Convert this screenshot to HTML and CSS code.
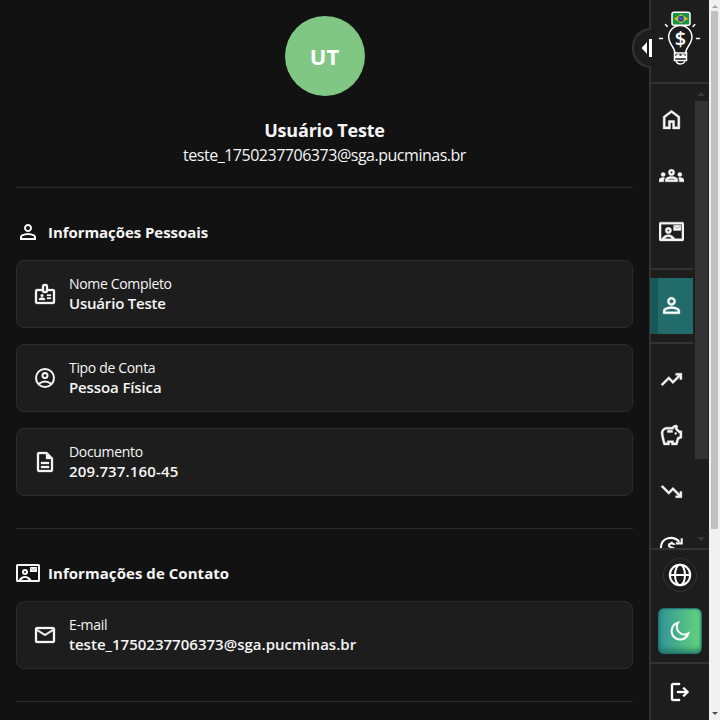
FILE: index.html
```
<!DOCTYPE html>
<html lang="pt-BR">
<head>
<meta charset="utf-8">
<title>Perfil</title>
<link rel="stylesheet" href="styles.css">
</head>
<body>
<svg class="sprite" aria-hidden="true">
  <symbol id="person" viewBox="0 -960 960 960"><path d="M480-480q-66 0-113-47t-47-113q0-66 47-113t113-47q66 0 113 47t47 113q0 66-47 113t-113 47ZM160-160v-112q0-34 17.5-62.5T224-378q62-31 126-46.5T480-440q66 0 130 15.5T736-378q29 15 46.5 43.5T800-272v112H160Zm80-80h480v-32q0-11-5.5-20T700-306q-54-27-109-40.5T480-360q-56 0-111 13.5T260-306q-9 5-14.5 14t-5.5 20v32Zm240-320q33 0 56.5-23.5T560-640q0-33-23.5-56.5T480-720q-33 0-56.5 23.5T400-640q0 33 23.5 56.5T480-560Z"/></symbol>
  <symbol id="contact" viewBox="0 0 24 24"><path fill-rule="evenodd" d="M1.5 3h21Q24 3 24 4.5v15q0 1.5-1.5 1.5h-21Q0 21 0 19.5v-15Q0 3 1.5 3ZM2 5v14h.6C4 16.5 6.500 15 9 15s5 1.500 6.400 4H22V5Zm3.500 14h7C11.500 17.600 10.300 17 9 17s-2.500.6-3.500 2ZM9 8a3 3 0 1 1 0 6 3 3 0 0 1 0-6Zm0 2a1 1 0 1 0 0 2 1 1 0 0 0 0-2Z"/><path d="M14 6h7v5h-7Z"/><path d="m14.500 7 3 2 3-2" fill="none" stroke="#333" stroke-width=".8"/></symbol>
</svg>
<div class="app">
  <main class="profile">
    <header class="hero">
      <div class="avatar">UT</div>
      <h1>Usuário Teste</h1>
      <p>teste_1750237706373@sga.pucminas.br</p>
    </header>
    <section class="section">
      <h2><svg class="icon"><use href="#person"/></svg><span class="title-personal">Informações Pessoais</span></h2>
      <div class="card">
        <svg class="icon" viewBox="0 0 24 24"><path fill-rule="evenodd" d="M11 2h2q2 0 2 2v3h5q2 0 2 2v11q0 2-2 2H4q-2 0-2-2V9q0-2 2-2h5V4q0-2 2-2Zm0 2v5h2V4ZM4 9v11h16V9h-5q0 2-2 2h-2q-2 0-2-2Z"/><circle cx="9" cy="13.500" r="1.500"/><path d="M6 18v-.6q0-1.900 3-1.900t3 1.900v.6ZM14 12.500h4V14h-4Zm0 3h4V17h-4Z"/></svg>
        <div class="field"><span class="label">Nome Completo</span><strong>Usuário Teste</strong></div>
      </div>
      <div class="card">
        <svg class="icon line" viewBox="0 0 24 24"><circle cx="12" cy="12" r="9"/><circle cx="12" cy="9.500" r="2.500"/><path d="M5.500 18C7.300 16.700 9.500 15.500 12 15.500s4.700 1.200 6.500 2.500"/></svg>
        <div class="field"><span class="label">Tipo de Conta</span><strong class="kind">Pessoa Física</strong></div>
      </div>
      <div class="card">
        <svg class="icon" viewBox="0 -960 960 960"><path d="M320-240h320v-80H320v80Zm0-160h320v-80H320v80ZM240-80q-33 0-56.500-23.500T160-160v-640q0-33 23.500-56.500T240-880h320l240 240v480q0 33-23.500 56.500T720-80H240Zm280-520v-200H240v640h480v-440H520Z"/></svg>
        <div class="field"><span class="label">Documento</span><strong class="number">209.737.160-45</strong></div>
      </div>
    </section>
    <section class="section">
      <h2><svg class="icon"><use href="#contact"/></svg><span class="title-contact">Informações de Contato</span></h2>
      <div class="card">
        <svg class="icon" viewBox="0 -960 960 960"><path d="M160-160q-33 0-56.500-23.500T80-240v-480q0-33 23.500-56.500T160-800h640q33 0 56.500 23.500T880-720v480q0 33-23.500 56.500T800-160H160Zm320-280L160-640v400h640v-400L480-440Zm0-80 320-200H160l320 200Z"/></svg>
        <div class="field"><span class="label">E-mail</span><strong class="mail">teste_1750237706373@sga.pucminas.br</strong></div>
      </div>
    </section>
  </main>
  <aside class="sidebar">
    <div class="brand">
      <svg class="logo" viewBox="0 0 44 58" fill="none" stroke="#fff" stroke-width="1.500" stroke-linecap="round">
        <path d="M17 43.500C17 37 10.700 34.500 10.700 27a11.600 11.600 0 0 1 23.200 0C33.900 34.500 27.600 37 27.600 43.500M1.500 28.500h3M38.500 28.500h3M7.500 14.500l1.800 2M36.800 14.500l-1.800 2"/>
        <path d="M16.500 43h12v3.500h-12ZM16.500 47.500h12v3h-12ZM18.500 52c1 2.600 6.500 2.600 8 0M19 45h2M24 45h2"/>
        <rect x="14" y="2.300" width="18" height="13" rx="2" fill="#159447"/>
        <path d="m23 4.300 7 4.500-7 4.500-7-4.500Z" fill="#d9c322" stroke="none"/><circle cx="23" cy="8.800" r="3" fill="#24479b" stroke="none"/><path d="M21 8q2.200-.2 4 1.500" stroke="#9db5d8" stroke-width=".5"/>
        <text class="dollar" x="22.400" y="35.500">$</text>
      </svg>
    </div>
    <div class="nav-row">
      <nav>
        <a><svg class="icon" viewBox="0 -960 960 960"><path d="M240-200h120v-240h240v240h120v-360L480-740 240-560v360Zm-80 80v-480l320-240 320 240v480H520v-240h-80v240H160Z"/></svg></a>
        <a><svg class="icon" viewBox="0 0 24 24"><path fill-rule="evenodd" d="M12 6a3 3 0 1 1 0 6 3 3 0 0 1 0-6Zm0 2a1 1 0 1 0 0 2 1 1 0 0 0 0-2ZM6 18v-1.500c0-2.200 2.700-3.500 6-3.500s6 1.300 6 3.500V18Zm2.200-2h7.600c-.5-.6-2-1-3.800-1s-3.300.4-3.800 1Z"/><circle cx="4" cy="11" r="2"/><circle cx="20" cy="11" r="2"/><path d="M0 18v-1.500C0 14.700 2 14 4 14l1.500.2A4 4 0 0 0 4.500 17v1ZM24 18v-1.500c0-1.800-2-2.500-4-2.500l-1.500.2a4 4 0 0 1 1 2.800v1Z"/></svg></a>
        <a><svg class="icon"><use href="#contact"/></svg></a>
        <hr>
        <a class="active"><svg class="icon"><use href="#person"/></svg></a>
        <hr>
        <a><svg class="icon" viewBox="0 -960 960 960"><path d="m136-240-56-56 296-298 160 160 208-206H640v-80h240v240h-80v-104L536-320 376-480 136-240Z"/></svg></a>
        <a><svg class="icon" viewBox="0 0 24 24"><path fill-rule="evenodd" d="M15 10a1 1 0 1 1 2 0 1 1 0 0 1-2 0ZM8 9h5V7H8Zm14-1.500v6.970l-2.820.94L17.500 21H12v-2h-2v2H4.500S2 12.540 2 9.500 4.460 4 7.500 4h5c.91-1.210 2.360-2 4-2 .83 0 1.500.67 1.500 1.500 0 .21-.04.41-.12.58-.14.34-.26.73-.32 1.150l2.270 2.270Zm-2 2h-1L15.500 6c0-.65.09-1.290.26-1.910-.97.25-1.760.97-2.090 1.910H7.500C5.570 6 4 7.570 4 9.500c0 1.880 1.220 6.650 2.010 9.500H8v-2h6v2h2.010l1.550-5.150 2.440-.82Z"/></svg></a>
        <a><svg class="icon" viewBox="0 -960 960 960"><path d="M640-240v-80h104L536-526 376-366 80-664l56-56 240 240 160-160 264 264v-104h80v240H640Z"/></svg></a>
        <a><svg class="icon line" viewBox="0 0 24 24"><path d="M1.800 13C1.800 1.500 14 .5 19.500 6.500M21.800 3v5h-5.600M15 9.500c-.8-1.600-5.500-2-5.500.5s5.500 1.500 5.500 4c0 2-4.500 2.500-5.500 0M12.200 6.500v2"/></svg></a>
      </nav>
      <div class="nav-scroll"><i class="up"></i><span></span><i class="down"></i></div>
    </div>
    <div class="tools">
      <button class="globe"><svg class="icon line" viewBox="0 0 24 24"><circle cx="12" cy="12" r="10.200"/><ellipse cx="12" cy="12" rx="5" ry="10.200"/><path d="M2 12h20"/></svg></button>
      <button class="theme"><svg class="icon line" viewBox="0 0 24 24"><path d="M10 3.800a8.500 8.500 0 1 0 10.300 10.600A7.600 7.600 0 0 1 10 3.800Z"/></svg></button>
    </div>
    <div class="exit"><svg class="icon" viewBox="0 -960 960 960"><path d="M200-120q-60 0-80-60v-600q20-60 80-60h280v80H200v560h280v80H200Zm440-160-55-58 102-102H360v-80h327L585-622l55-58 200 200-200 200Z"/></svg></div>
    <button class="toggle"><svg viewBox="0 0 12 18"><path d="M6 3v12L.5 9ZM8 0h3v18H8Z"/></svg></button>
  </aside>
  <div class="page-scroll"><i class="up"></i><span></span><i class="down"></i></div>
</div>
</body>
</html>
```
FILE: styles.css
```
* { box-sizing: border-box; }
body { margin: 0; background: #121212; color: #f5f5f5; font-family: "Open Sans", "Noto Sans", sans-serif; overflow: hidden; }
h1, h2, p { margin: 0; }
button { padding: 0; color: inherit; }
.sprite { position: absolute; width: 0; height: 0; }
.icon { width: 24px; height: 24px; flex: none; display: block; fill: currentColor; }
.line { fill: none; stroke: currentColor; stroke-width: 2; }
.app { display: flex; height: 720px; }

.profile { width: 649px; height: 720px; padding: 16px; overflow: hidden; }
.hero { height: 172px; display: flex; flex-direction: column; align-items: center; border-bottom: 1px solid #2b2b2b; }
.avatar { width: 80px; height: 80px; border-radius: 50%; background: #81c784; color: #fff; font-size: 22px; font-weight: 700; line-height: 81px; text-align: center; }
h1 { margin-top: 20px; font-size: 18px; line-height: 28px; font-weight: 700; letter-spacing: -.2px; }
.hero p { font-size: 16px; line-height: 22px; letter-spacing: -.48px; white-space: nowrap; }
.section { width: 617px; padding: 32px 0; border-bottom: 1px solid #2b2b2b; }
h2 { display: flex; align-items: center; gap: 8px; height: 24px; margin-bottom: 16px; font-size: 15px; font-weight: 700; }
.title-personal { letter-spacing: -.06px; }
.title-contact { letter-spacing: .05px; }
.card { height: 68px; padding: 0 16px; display: flex; align-items: center; gap: 12px; border: 1px solid #2b2b2b; border-radius: 8px; background: #1d1d1d; }
.card .icon:not(.line) { stroke: currentColor; }
.card .icon:not(.line) path { stroke-width: .3px; vector-effect: non-scaling-stroke; }
.card .icon:not(.line) circle { stroke: none; }
.card + .card { margin-top: 16px; }
.field { display: flex; flex-direction: column; padding-bottom: 2px; }
.label { font-size: 14px; line-height: 19px; letter-spacing: -.33px; }
.field strong { font-size: 15px; line-height: 20px; font-weight: 600; letter-spacing: -.2px; }
.field .kind { letter-spacing: -.12px; }
.field .number { letter-spacing: .14px; }
.field .mail { letter-spacing: .02px; }

.sidebar { position: relative; width: 60px; height: 720px; flex: none; display: flex; flex-direction: column; border-left: 2px solid #333; background: #1d1d1d; }
.brand { height: 84px; display: flex; justify-content: center; padding: 10px 0 0; border-bottom: 2px solid #333; }
.logo { width: 44px; height: 58px; flex: none; }
.dollar { fill: #fff; stroke: none; font: 600 20px "Open Sans", sans-serif; text-anchor: middle; }
.nav-row { height: 464px; margin-left: -1px; padding-left: 1px; display: flex; overflow: hidden; }
nav { width: 42px; padding-top: 8px; flex: none; }
nav a { height: 56px; display: flex; align-items: center; padding: 0 0 1px 8px; }
nav .icon { width: 25px; height: 25px; stroke: currentColor; }
nav .icon:not(.line), symbol path { stroke-width: .4px; }
nav .icon:not(.line) path, symbol path { vector-effect: non-scaling-stroke; }
nav hr { height: 2px; margin: 8px 0; border: 0; background: #333; }
nav .active { width: 43px; margin-left: -1px; border-left: 8px solid #195757; padding-left: 1px; background: #216b6b; color: #fff; }
.nav-scroll, .page-scroll { display: flex; flex-direction: column; align-items: center; }
.nav-scroll { width: 14px; margin-left: 1px; }
.nav-scroll span { width: 13px; height: 358px; margin-left: 1px; margin-top: 5px; background: #333; flex: none; }
.up, .down { width: 0; height: 0; border: 4px solid transparent; }
.up { border-top: 0; border-bottom-color: #383838; }
.down { border-bottom: 0; border-top-color: #383838; }
.nav-scroll .up { margin-top: 8px; }
.nav-scroll .down { margin-top: 78px; }
.tools { height: 114px; padding-top: 8px; display: flex; flex-direction: column; align-items: center; gap: 16px; border-top: 2px solid #333; }
.globe { width: 34px; height: 34px; display: grid; place-items: center; border: 1px solid #333; border-radius: 50%; background: transparent; color: #fff; }
.theme { width: 44px; height: 46px; display: grid; place-items: center; border: 1px solid #217575; border-radius: 6px; background: linear-gradient(90deg, #319494, #65d47d); box-shadow: inset 0 -4px 4px #1d6b5a99, inset 0 0 2px #217575; color: #fff; }
.exit { height: 58px; display: grid; place-items: center; border-top: 2px solid #333; color: #fff; }
.exit .icon { stroke: #fff; stroke-width: 14px; }
.toggle { position: absolute; left: -19px; top: 28px; width: 19px; height: 40px; border: 2px solid #333; border-right: 0; border-radius: 20px 0 0 20px; background: #1d1d1d; }
.toggle svg { position: absolute; left: 7px; top: 9px; width: 12px; height: 18px; fill: #fff; }

.page-scroll { width: 11px; background: #f1f1f1; }
.page-scroll span { width: 7px; height: 518px; margin: 3px 0 0; background: #c1c1c1; }
.page-scroll i { border-width: 3px; }
.page-scroll .up { margin-top: 5px; border-top: 0; border-bottom-color: #a3a3a3; }
.page-scroll .down { margin-top: 183px; border-bottom: 0; border-top-color: #505050; }
```
